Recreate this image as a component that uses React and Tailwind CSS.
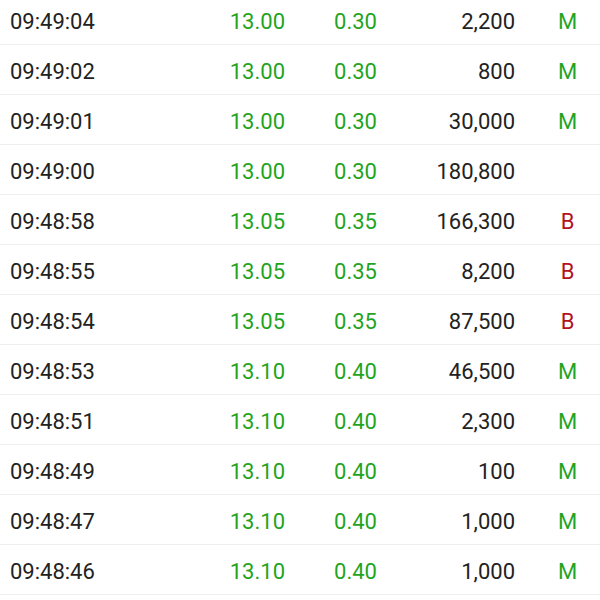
const trades = [
  { time: '09:49:04', price: '13.00', change: '0.30', volume: '2,200', side: 'M' },
  { time: '09:49:02', price: '13.00', change: '0.30', volume: '800', side: 'M' },
  { time: '09:49:01', price: '13.00', change: '0.30', volume: '30,000', side: 'M' },
  { time: '09:49:00', price: '13.00', change: '0.30', volume: '180,800', side: '' },
  { time: '09:48:58', price: '13.05', change: '0.35', volume: '166,300', side: 'B' },
  { time: '09:48:55', price: '13.05', change: '0.35', volume: '8,200', side: 'B' },
  { time: '09:48:54', price: '13.05', change: '0.35', volume: '87,500', side: 'B' },
  { time: '09:48:53', price: '13.10', change: '0.40', volume: '46,500', side: 'M' },
  { time: '09:48:51', price: '13.10', change: '0.40', volume: '2,300', side: 'M' },
  { time: '09:48:49', price: '13.10', change: '0.40', volume: '100', side: 'M' },
  { time: '09:48:47', price: '13.10', change: '0.40', volume: '1,000', side: 'M' },
  { time: '09:48:46', price: '13.10', change: '0.40', volume: '1,000', side: 'M' },
]

export default function App() {
  return (
    <div className="h-[600px] w-[600px] overflow-hidden bg-white font-['Roboto',sans-serif] text-[22px]">
      <div className="-mt-[5px]">
        {trades.map((t) => (
          <div key={t.time} className="flex h-[50px] items-center border-b border-[#efefef] pt-[3px]">
            <div className="w-[200px] pl-[10px] text-[#222]">{t.time}</div>
            <div className="w-[85px] text-right text-[#1fa41f]">{t.price}</div>
            <div className="w-[92px] text-right text-[#1fa41f]">{t.change}</div>
            <div className="w-[138px] text-right text-[#222]">{t.volume}</div>
            <div
              className={`w-[85px] pl-[20px] text-center ${t.side === 'B' ? 'text-[#b3121c]' : 'text-[#1fa41f]'}`}
            >
              {t.side}
            </div>
          </div>
        ))}
      </div>
    </div>
  )
}
